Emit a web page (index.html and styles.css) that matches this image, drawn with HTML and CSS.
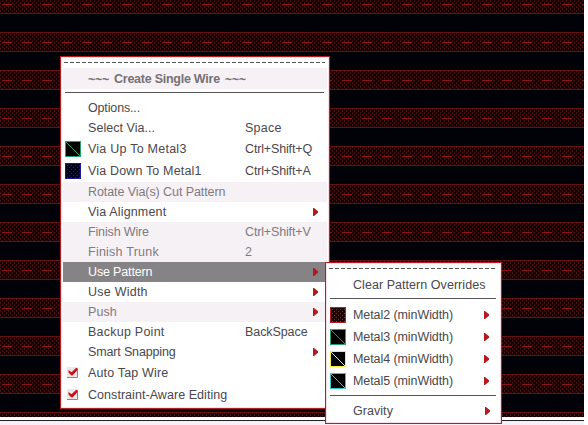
FILE: index.html
```
<!DOCTYPE html>
<html lang="en">
<head>
<meta charset="utf-8">
<title>Create Single Wire</title>
<link rel="stylesheet" href="styles.css">
</head>
<body>
<svg class="canvas" width="588" height="425" aria-hidden="true">
  <defs>
    <pattern id="dots" width="4" height="4" patternUnits="userSpaceOnUse">
      <path d="M0 0h1v2h-1zM2 2h1v2h-1z" fill="#481011"/>
    </pattern>
    <pattern id="band" y="-6" width="20" height="38" patternUnits="userSpaceOnUse">
      <rect width="20" height="20" fill="#120203"/>
      <rect width="20" height="20" fill="url(#dots)"/>
      <path d="M0 .5h20M0 19.5h20" stroke="#651011"/>
      <path d="M2 10.5h10" stroke="#8c1414"/>
    </pattern>
  </defs>
  <rect width="588" height="425" fill="#fff"/>
  <rect width="584" height="417" fill="#010108"/>
  <rect width="584" height="417" fill="url(#band)"/>
  <rect y="420" width="584" height="1" fill="#222"/>
  <rect y="421" width="584" height="4" fill="#f4f0f6"/>
</svg>

<div class="menu main">
  <div class="tear"></div>
  <div class="title"><span class="wave">~~~</span><b>Create Single Wire</b><span class="wave">~~~</span></div>
  <div class="sep"></div>
  <div class="row"><span class="label tight">Options...</span></div>
  <div class="row"><span class="label snug">Select Via...</span><kbd>Space</kbd></div>
  <div class="row tall"><i class="swatch green"></i><span class="label">Via Up To Metal3</span><kbd class="tight">Ctrl+Shift+Q</kbd></div>
  <div class="row tall"><i class="swatch blue"></i><span class="label near">Via Down To Metal1</span><kbd class="tight">Ctrl+Shift+A</kbd></div>
  <div class="row off"><span class="label close">Rotate Via(s) Cut Pattern</span></div>
  <div class="row"><span class="label near">Via Alignment</span><i class="arrow"></i></div>
  <div class="row off"><span class="label tight">Finish Wire</span><kbd class="tight">Ctrl+Shift+V</kbd></div>
  <div class="row off"><span class="label">Finish Trunk</span><kbd>2</kbd></div>
  <div class="row active"><span class="label tight">Use Pattern</span><i class="arrow"></i></div>
  <div class="row"><span class="label">Use Width</span><i class="arrow"></i></div>
  <div class="row off"><span class="label snug">Push</span><i class="arrow"></i></div>
  <div class="row"><span class="label">Backup Point</span><kbd class="close">BackSpace</kbd></div>
  <div class="row"><span class="label tight">Smart Snapping</span><i class="arrow"></i></div>
  <div class="row tall"><svg class="check" viewBox="0 0 12 12"><rect width="11" height="11" fill="#ede6e8"/><path d="M0 10.5h10.5V2" fill="none" stroke="#8b8588"/><path d="M1.5 3l3 2.2L9 1h1.5v2L5.5 8.5h-1L1.5 5.5z" fill="#c8101a"/></svg><span class="label near">Auto Tap Wire</span></div>
  <div class="row tall"><svg class="check" viewBox="0 0 12 12"><rect width="11" height="11" fill="#ede6e8"/><path d="M0 10.5h10.5V2" fill="none" stroke="#8b8588"/><path d="M1.5 3l3 2.2L9 1h1.5v2L5.5 8.5h-1L1.5 5.5z" fill="#c8101a"/></svg><span class="label snug">Constraint-Aware Editing</span></div>
</div>

<div class="menu sub">
  <div class="tear"></div>
  <div class="row clear"><span class="label snug">Clear Pattern Overrides</span></div>
  <div class="sep"></div>
  <div class="row tall"><i class="swatch red"></i><span class="label close">Metal2 (minWidth)</span><i class="arrow"></i></div>
  <div class="row tall"><i class="swatch green"></i><span class="label close">Metal3 (minWidth)</span><i class="arrow"></i></div>
  <div class="row tall"><i class="swatch yellow"></i><span class="label close">Metal4 (minWidth)</span><i class="arrow"></i></div>
  <div class="row tall"><i class="swatch cyan"></i><span class="label close">Metal5 (minWidth)</span><i class="arrow"></i></div>
  <div class="sep low"></div>
  <div class="row"><span class="label snug">Gravity</span><i class="arrow last"></i></div>
</div>
</body>
</html>
```
FILE: styles.css
```
* { box-sizing: border-box; }
body {
  margin: 0;
  width: 588px;
  height: 425px;
  overflow: hidden;
  position: relative;
  font: 12.5px/20px "Liberation Sans", Arial, sans-serif;
  letter-spacing: 0.24px;
  color: #4a484c;
}
.canvas { display: block; }

.menu {
  position: absolute;
  background: #fff;
  border: 1px solid #b51d22;
  box-shadow: inset 0 0 0 1px #fbdfe2;
  display: flex;
  flex-direction: column;
}
.main { left: 60px; top: 56px; width: 270px; height: 353px; padding: 2px; }
.sub { left: 325px; top: 262px; width: 177px; height: 162px; padding: 2px; }

.tear {
  height: 9px;
  margin: 0 2px 0 1px;
  background: repeating-linear-gradient(90deg, #555 0 4px, transparent 4px 6px) 0 3px / 100% 1px no-repeat;
}
.title {
  height: 21px;
  padding-left: 25px;
  display: flex;
  align-items: center;
  gap: 5px;
  background: #f5f1f5;
  color: #757177;
}
.title b { letter-spacing: -0.25px; }
.wave { padding-top: 2px; font-weight: bold; letter-spacing: -0.3px; }
.sep { height: 1px; margin: 3px 3px 5px 2px; background: #555; }
.row {
  height: 20px;
  display: grid;
  grid-template-columns: 25px 157px 1fr;
  align-items: center;
  white-space: nowrap;
}
.tall { height: 22px; }
.label { grid-column: 2; grid-row: 1; }
kbd { grid-column: 3; grid-row: 1; font: inherit; }
.near { letter-spacing: 0.16px; }
.snug { letter-spacing: 0.05px; }
.close { letter-spacing: -0.08px; }
.tight { letter-spacing: -0.15px; }
.off { background: #f5f1f5; color: #7f7b81; }
.active { background: #858386; color: #fff; }

.arrow {
  grid-column: 3;
  grid-row: 1;
  justify-self: end;
  margin-right: 9px;
  width: 5px;
  height: 8px;
  background: #b3191d;
  clip-path: polygon(0 0, 20% 0, 100% 40%, 100% 60%, 20% 100%, 0 100%);
}
.swatch, .check { grid-column: 1; grid-row: 1; }
.check { width: 12px; height: 12px; margin-left: 4px; }
.swatch {
  width: 16px;
  height: 16px;
  margin-left: 2px;
  border: 1px solid var(--c);
  background: linear-gradient(45deg, transparent 47%, var(--c) 47% 53%, transparent 53%) #000;
}
.green { --c: #26a268; }
.yellow { --c: #f2ee39; }
.cyan { --c: #33c5c8; }
.red, .blue {
  background:
    conic-gradient(from 270deg at 1px 1px, var(--d) 90deg, transparent 0) 1px 1px / 4px 4px,
    conic-gradient(from 270deg at 1px 1px, var(--d) 90deg, transparent 0) 3px 3px / 4px 4px,
    var(--bg);
}
.red { --c: #b81e22; --d: #a32228; --bg: #200304; }
.blue { --c: #1818a0; --d: #2020a0; --bg: #02021c; }

.sub .row { grid-template-columns: 25px 115px 1fr; }
.sub .arrow { margin-right: 10px; }
.sub .clear { margin-top: 1px; }
.sub .low { margin-top: 3px; }
.sub .last { margin-right: 9px; }
```
